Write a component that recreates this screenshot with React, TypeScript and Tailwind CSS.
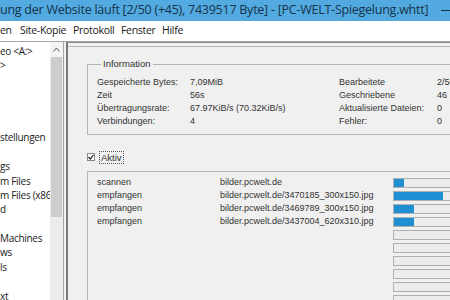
const treeRows = [
  "eo <A:>",
  ">",
  "",
  "",
  "",
  "",
  "stellungen",
  "",
  "gs",
  "m Files",
  "m Files (x86",
  "d",
  "",
  "Machines",
  "ws",
  "ls",
  "",
  "xt",
];

const infoRows = [
  ["Gespeicherte Bytes:", "7,09MiB", "Bearbeitete", "2/50"],
  ["Zeit", "56s", "Geschriebene", "46"],
  ["Übertragungsrate:", "67.97KiB/s (70.32KiB/s)", "Aktualisierte Dateien:", "0"],
  ["Verbindungen:", "4", "Fehler:", "0"],
];

const transfers = [
  { state: "scannen", url: "bilder.pcwelt.de", done: 10 },
  { state: "empfangen", url: "bilder.pcwelt.de/3470185_300x150.jpg", done: 49 },
  { state: "empfangen", url: "bilder.pcwelt.de/3469789_300x150.jpg", done: 20 },
  { state: "empfangen", url: "bilder.pcwelt.de/3437004_620x310.jpg", done: 20 },
  { state: "", url: "", done: 0 },
  { state: "", url: "", done: 0 },
  { state: "", url: "", done: 0 },
  { state: "", url: "", done: 0 },
  { state: "", url: "", done: 0 },
  { state: "", url: "", done: 0 },
];

export default function App() {
  return (
    <div className="w-[450px] h-[300px] overflow-hidden flex flex-col bg-[#f0f0f0] font-['Liberation_Sans',sans-serif]">
      {/* title bar */}
      <div className="h-[21px] shrink-0 bg-[#52aae0] flex items-center text-[#163249] font-['Open_Sans',sans-serif] text-[12.5px] tracking-[-0.25px] whitespace-nowrap">
        <span className="flex-1 overflow-hidden">
          ung der Website läuft [2/50 (+45), 7439517 Byte] - [PC-WELT-Spiegelung.whtt]
        </span>
        <span className="w-[9px] h-px bg-[#163249] shrink-0" />
      </div>

      {/* menu */}
      <div className="h-[21px] shrink-0 bg-white border-b border-[#a9a9a9] flex items-center text-[10.5px] text-[#1b1b1b] font-['Open_Sans',sans-serif] tracking-[-0.3px] whitespace-nowrap">
        <span className="w-[20px]">en</span>
        <span className="w-[53px]">Site-Kopie</span>
        <span className="w-[48px]">Protokoll</span>
        <span className="w-[41px]">Fenster</span>
        <span>Hilfe</span>
      </div>

      <div className="flex flex-1 min-h-0">
        {/* tree */}
        <div className="w-[50px] shrink-0 bg-white pt-[2px] overflow-hidden font-['Open_Sans',sans-serif] text-[10px] tracking-[-0.3px] text-[#1b1b1b]">
          {treeRows.map((t, i) => (
            <div key={i} className="h-[14.4px] leading-[14.4px] whitespace-nowrap">
              {t}
            </div>
          ))}
        </div>
        {/* scrollbar */}
        <div className="w-[13px] shrink-0 bg-[#ececec] flex flex-col items-center">
          <div className="h-[15px] w-full bg-[#f4f4f4] flex items-center justify-center">
            <svg width="7" height="5" viewBox="0 0 7 5">
              <path d="M0.5 4.5 L3.5 1 L6.5 4.5" fill="none" stroke="#555" strokeWidth="1" />
            </svg>
          </div>
          <div className="w-[11px] h-[160px] bg-[#cdcdcd]" />
        </div>
        {/* splitter */}
        <div className="w-[5px] shrink-0 border-l border-[#a5a5a5] border-r-2 border-r-[#7a7a7a] bg-[#f0f0f0]" />

        {/* right pane */}
        <div className="flex-1 min-w-0 overflow-hidden border-t border-[#8a8a8a] text-[9px] text-[#333]">
          <div className="h-[4px] border-b border-[#b9b9b9]" />

          <fieldset className="ml-[19px] mt-[10px] w-[420px] border-t border-l border-b border-[#b4b4b4] pl-[9px] pt-[5px] pb-[6px]">
            <legend className="ml-[4px] px-[2px] text-[9.5px] text-[#333]">Information</legend>
            {infoRows.map((r, i) => (
              <div key={i} className="grid grid-cols-[93px_149px_98px_40px] h-[13px] leading-[13px] whitespace-nowrap">
                <span>{r[0]}</span>
                <span>{r[1]}</span>
                <span>{r[2]}</span>
                <span>{r[3]}</span>
              </div>
            ))}
          </fieldset>

          <div className="ml-[19px] mt-[15px] flex items-center h-[14px]">
            <div className="w-[8px] h-[8px] bg-white border border-[#8a8a8a] flex items-center justify-center">
              <svg width="6" height="6" viewBox="0 0 6 6">
                <path d="M0.5 3 L2.3 5 L5.5 0.8" fill="none" stroke="#222" strokeWidth="1.2" />
              </svg>
            </div>
            <span className="ml-[4px] px-[1px] border border-dotted border-[#555] leading-[11px] text-[9.5px]">Aktiv</span>
          </div>

          <div className="ml-[19px] mt-[7px] w-[420px] h-[200px] border-t border-l border-[#b4b4b4] pl-[9px] pt-[4px]">
            {transfers.map((t, i) => (
              <div key={i} className="flex items-center h-[13px] leading-[13px] whitespace-nowrap">
                <span className="w-[123px] shrink-0">{t.state}</span>
                <span className="w-[173px] shrink-0 overflow-hidden">{t.url}</span>
                <div className="w-[80px] h-[10px] shrink-0 border border-[#b0b0b0] bg-[#ececec]">
                  <div className="h-full bg-[#1e8fd3]" style={{ width: `${t.done}px` }} />
                </div>
              </div>
            ))}
          </div>
        </div>
      </div>
    </div>
  );
}
